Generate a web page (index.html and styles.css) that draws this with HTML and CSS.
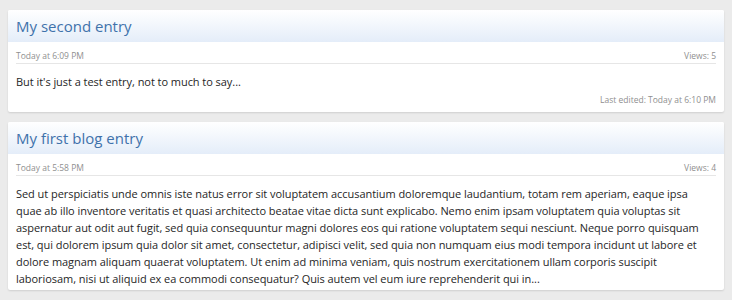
FILE: index.html
```html
<!DOCTYPE html>
<html lang="en">

<head>
    <meta charset="UTF-8">
    <meta name="viewport" content="width=device-width, initial-scale=1.0">
    <title>Blog</title>
    <link rel="stylesheet" href="styles.css">
</head>

<body>

    <div class="entries">
        <div class="entry">
            <div class="head">
                <h2>My second entry</h2>
            </div>
            <div class="meta">
                <span>Today at 6:09 PM</span>
                <span>Views: 5</span>
            </div>
            <div class="text">
                <p>But it's just a test entry, not to much to say...</p>
            </div>
            <div class="edited">Last edited: Today at 6:10 PM</div>
        </div>

        <div class="entry">
            <div class="head">
                <h2>My first blog entry</h2>
            </div>
            <div class="meta">
                <span>Today at 5:58 PM</span>
                <span>Views: 4</span>
            </div>
            <div class="text">
                <p>Sed ut perspiciatis unde omnis iste natus error sit voluptatem accusantium doloremque laudantium, totam rem aperiam, eaque ipsa quae ab illo inventore veritatis et quasi architecto beatae vitae dicta sunt explicabo. Nemo enim ipsam voluptatem quia voluptas sit aspernatur aut odit aut fugit, sed quia consequuntur magni dolores eos qui ratione voluptatem sequi nesciunt. Neque porro quisquam est, qui dolorem ipsum quia dolor sit amet, consectetur, adipisci velit, sed quia non numquam eius modi tempora incidunt ut labore et dolore magnam aliquam quaerat voluptatem. Ut enim ad minima veniam, quis nostrum exercitationem ullam corporis suscipit laboriosam, nisi ut aliquid ex ea commodi consequatur? Quis autem vel eum iure reprehenderit qui in...</p>
            </div>
        </div>
    </div>

</body>

</html>
```
FILE: styles.css
```css
* {
    margin: 0;
    padding: 0;
    box-sizing: border-box;
}

body {
    background-color: #ebebeb;
    font-family: "Open Sans", "Noto Sans", sans-serif;
    color: #262626;
}

.entries {
    display: flex;
    flex-direction: column;
    gap: 10px;
    padding: 10px 8px;
}

.entry {
    background-color: white;
    border-radius: 2px;
    box-shadow: 0 1px 2px rgba(0, 0, 0, 0.12);
}

.head {
    height: 32px;
    padding: 1px 8px 0;
    background: linear-gradient(to bottom, #ffffff, #e4edf9);
    border-radius: 2px 2px 0 0;

    & h2 {
        font-size: 15px;
        font-weight: normal;
        line-height: 31px;
        color: #3f72ab;
    }
}

.meta {
    height: 22px;
    margin: 0 8px;
    padding-top: 7px;
    display: flex;
    justify-content: space-between;
    font-size: 8.5px;
    line-height: 14px;
    color: #8f8f8f;
    border-bottom: 1px solid #e6e6e6;
}

.text {
    padding: 9px 8px 3px;
    font-size: 11px;
    line-height: 17px;
    letter-spacing: -0.05px;
}

.edited {
    padding: 0 8px 5px;
    text-align: right;
    font-size: 8.5px;
    line-height: 14px;
    color: #8f8f8f;
}
```
